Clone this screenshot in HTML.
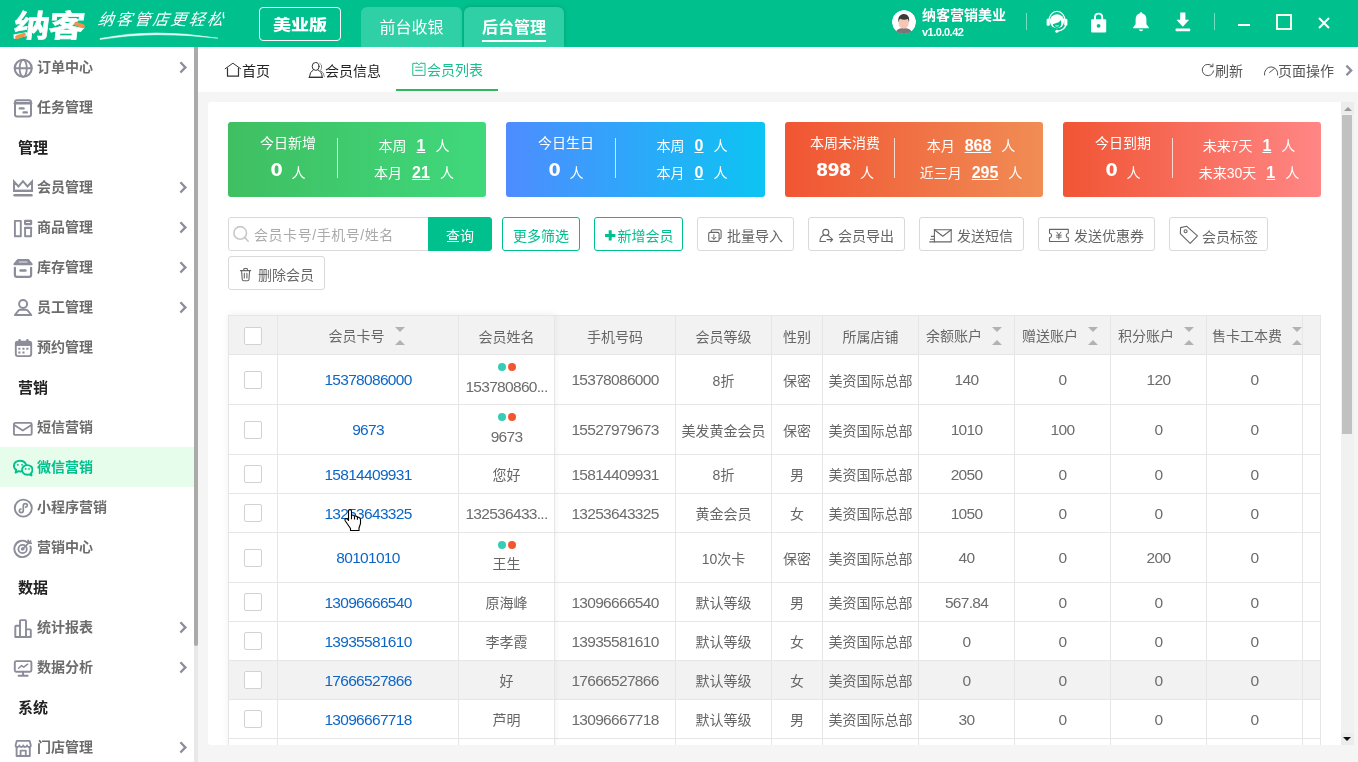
<!DOCTYPE html>
<html lang="zh-CN">
<head>
<meta charset="utf-8">
<title>会员列表</title>
<style>
*{box-sizing:border-box;margin:0;padding:0}
html,body{width:1358px;height:762px;overflow:hidden;background:#f5f5f5;font-family:"Liberation Sans","Noto Sans CJK SC",sans-serif;font-size:14px;color:#666}
.abs{position:absolute}
#app{position:absolute;left:0;top:0;width:1358px;height:762px;overflow:hidden;will-change:transform;background:#f5f5f5}
/* ---------- top bar ---------- */
#top{position:absolute;left:0;top:0;width:1358px;height:47px;background:#00c08e;color:#fff}
#logo{position:absolute;left:13.5px;top:2.5px;width:74px;height:40px}
#slogan{position:absolute;left:98px;top:9px;font-size:16px;letter-spacing:2.2px;font-style:italic;font-weight:400;line-height:22px;white-space:nowrap;transform:skewX(-8deg)}
#swoosh{position:absolute;left:98px;top:30px}
#ver{position:absolute;left:259px;top:7px;width:82px;height:34px;border:1px solid #fff;border-radius:4px;text-align:center;white-space:nowrap}
#ver span{display:inline-block;font-size:18px;font-weight:900;line-height:32px;transform:scale(1,.82);transform-origin:50% 62%}
.ttab{position:absolute;top:7px;height:40px;width:100px;background:#2fd0a5;border-radius:6px 6px 0 0;text-align:center;font-size:16px;line-height:42px;white-space:nowrap}
#tt2 span{display:inline-block;font-weight:700;position:relative}
#tt2 span:after{content:"";position:absolute;left:0;right:0;top:33px;height:2px;background:#fff}
#tt2{box-shadow:0 0 4px rgba(0,60,40,.28)}
#uname{position:absolute;left:922px;top:5px;font-size:14px;font-weight:700;line-height:20px;white-space:nowrap}
#uver{position:absolute;left:922px;top:25px;letter-spacing:-.5px;font-size:11px;font-weight:700;line-height:14px;white-space:nowrap}
.tsep{position:absolute;top:13px;width:1px;height:17px;background:rgba(255,255,255,.45)}

#logo .lg{position:absolute;left:0;top:0;font-family:"Noto Sans CJK SC",sans-serif;font-weight:700;font-size:31px;line-height:42px;white-space:nowrap;transform-origin:0 50%;transform:scaleX(1.17) skewX(-6deg);letter-spacing:-1px;-webkit-text-stroke:.6px #fff}
#logo i{position:absolute;background:#f4914a;height:4px;border-radius:2px;transform:rotate(-18deg)}
#logo .o1{left:1px;top:31px;width:11px}
#logo .o2{left:60px;top:20px;width:11px;transform:rotate(20deg)}
/* ---------- sidebar ---------- */
#side{position:absolute;left:0;top:47px;width:194px;height:715px;background:#fff;overflow:hidden}
#sbar{position:absolute;left:194px;top:47px;width:4px;height:715px;background:#e8e8e8}
#sbar i{position:absolute;left:0;top:0;width:4px;height:599px;background:#aaa;border-radius:0 0 2px 2px}
.mi{position:absolute;left:0;width:194px;height:40px;line-height:40px;font-weight:700;font-size:14px;color:#6c6c6c;white-space:nowrap}
.mi span{position:absolute;left:37px;top:0}
.mi svg.ic{position:absolute;left:13px;top:10px}
.mi svg.ch{position:absolute;left:179px;top:14px}
.mi.on{background:#e6fdec;color:#00c08e}
.mh{position:absolute;left:18px;height:40px;line-height:42px;font-weight:700;font-size:15px;color:#222;white-space:nowrap}
/* ---------- page tabs ---------- */
#tabs{position:absolute;left:198px;top:47px;width:1160px;height:45px;background:#fff;border-top:2px solid #f8f6f6}
.pt{position:absolute;top:47px;height:45px;line-height:49px;font-size:14px;color:#222;white-space:nowrap}
/* ---------- main card ---------- */
#card{position:absolute;left:208px;top:102px;width:1133px;height:643px;background:#fff;border-radius:3px 0 0 3px;overflow:hidden}
#vs{position:absolute;left:1341px;top:102px;width:13px;height:643px;background:#f1f1f1}
#vs i{position:absolute;left:1px;top:13px;width:10px;height:319px;background:#c1c1c1}
#vs b{position:absolute;left:0;width:13px;height:12px;background:#ececec}
#vs b:after{content:"";position:absolute;left:2.5px;top:4.5px;border:4px solid transparent}
#vs b.u{top:0}#vs b.u:after{border-bottom:4.500px solid #9a9a9a;border-top-width:0}
#vs b.dn{top:631px}#vs b.dn:after{border-top:4.500px solid #111;border-bottom-width:0;top:3.5px;left:2px}
.st{position:absolute;top:20px;width:258px;height:75px;border-radius:3px;color:#fff;white-space:nowrap}
.st .a{position:absolute;left:0;width:120px;top:10px;text-align:center;line-height:22px;font-size:14px}
.st .b{position:absolute;left:0;width:120px;top:35px;text-align:center;line-height:26px;font-size:14px}
.st .b u{text-decoration:none;position:relative;top:1.5px}
.st .b b{font-family:"DejaVu Sans","Liberation Sans",sans-serif;font-size:17.5px;letter-spacing:-.7px;margin-right:9.5px}
.st .d{position:absolute;left:109px;top:16px;width:1px;height:40px;background:rgba(255,255,255,.75)}
.st .r{position:absolute;left:112px;width:148px;text-align:center;line-height:24px;font-size:14px}
.st .r b{font-size:16px;text-decoration:underline;text-underline-offset:1px;margin:0 10px}
.st .r1{top:12px}.st .r2{top:39px}
/* toolbar */
.btn{position:absolute;height:34px;border:1px solid #d9d9d9;border-radius:3px;background:#fff;color:#666;font-size:14px;line-height:32px;white-space:nowrap}
.btn span{position:absolute;top:2px}
.btn svg{position:absolute}
.btn.g{border-color:#00c08e;color:#00c08e}
/* table */
#tb{position:absolute;left:20px;top:213px;width:1093px;height:440px;border:1px solid #e6e6e6;overflow:hidden}
#fx{position:absolute;left:20px;top:213px;width:327px;height:440px;box-shadow:0 -1px 7px rgba(0,0,0,.06)}
table{border-collapse:separate;border-spacing:0;table-layout:fixed;width:1170px}
td,th{border-right:1px solid #e6e6e6;border-bottom:1px solid #e6e6e6;text-align:center;font-weight:400;font-size:14px;color:#666;white-space:nowrap;overflow:hidden;padding:0;vertical-align:middle;position:relative}
th{height:39px;background:#f2f2f2;line-height:20px;padding-top:3px}
th.sl{text-align:left;padding-left:7px}
th.c10{padding-left:5px}
th.c1{padding-right:3px}
th .cb{top:-2px}
.n{font-size:15.5px;letter-spacing:-.7px;color:#6c6c6c}
tr.s td.n{padding-top:2px}
tr.h td{height:50px}
tr.s td{height:39px}
tr.hv td{background:#f2f2f2}
td a{color:#0d66c6;text-decoration:none}
.cb{display:inline-block;width:18px;height:18px;border:1px solid #d2d2d2;border-radius:2px;background:#fff;vertical-align:middle;position:relative;top:0}
.so{display:inline-block;position:relative;width:10px;height:20px;vertical-align:middle;margin-left:10px;top:-1px}
.so:before{content:"";position:absolute;left:0;top:1px;border:5px solid transparent;border-top-color:#b2b2b2;border-bottom-width:0}
.so:after{content:"";position:absolute;left:0;top:14px;border:5px solid transparent;border-bottom-color:#b2b2b2;border-top-width:0}
.dots{position:absolute;left:0;right:0;top:8px;height:9px;text-align:center;line-height:9px;font-size:0}
.dots i{display:inline-block;width:8px;height:8px;border-radius:50%;background:#36cdb5}
.dots i+i{background:#f2562f;margin-left:2px}
.nm{display:block;padding-top:15px}
.nm.nc{padding-top:11px}
</style>
</head>
<body>
<div id="app">
<div id="top">

  <div id="logo"><span class="lg">纳客</span><i class="o1"></i><i class="o2"></i></div>
  <svg id="swoosh" width="124" height="12" viewBox="0 0 124 12"><path d="M2 8.5 Q55 -2.5 120 8.2 Q55 0.5 2 9.5Z" fill="#e8fff6" stroke="#e8fff6" stroke-width=".5"/></svg>
  <svg class="abs" style="left:892px;top:10px" width="24" height="24" viewBox="0 0 24 24"><defs><clipPath id="avc"><circle cx="12" cy="12" r="12"/></clipPath></defs><g clip-path="url(#avc)"><circle cx="12" cy="12" r="12" fill="#fff"/><rect x="10" y="15" width="3.4" height="5" fill="#f7c5b4"/><ellipse cx="11.7" cy="13" rx="5.1" ry="5.6" fill="#f7c5b4"/><path d="M6.4 12.6Q5.6 7.2 8.4 5.2Q11.4 3.2 14.8 4.8Q17.8 6.6 17 12.4Q16.6 10.2 15.8 9Q12 10.4 8 8.8Q6.8 10.2 6.4 12.6Z" fill="#3b3b3b"/><path d="M3.5 24Q4 19.6 8 18.6L10 18.3Q11.7 19.2 13.4 18.3L15.6 18.6Q19.6 19.6 20.2 24Z" fill="#777"/></g></svg>
  <svg class="abs" style="left:1046px;top:10px" width="22" height="24" viewBox="0 0 22 24" fill="none"><path d="M3 10.400A8 9 0 0 1 19 10.400" stroke="#fff" stroke-width="1.200"/><ellipse cx="11" cy="11.300" rx="7.100" ry="7" fill="#fff"/><path d="M6.800 14.200Q9.800 13.200 12.600 12.300Q14 11.700 14.500 10.100Q15.900 12.500 15.300 14.800Q14.300 17.900 11 18.100Q7.600 17.900 6.800 14.200Z" fill="#00c08e"/><path d="M9.400 15.700Q11 16.500 12.700 15.700" stroke="#fff" stroke-width=".9"/><rect x=".600" y="8.800" width="3.200" height="7" rx="1.300" fill="#fff"/><rect x="18.200" y="8.800" width="3.200" height="7" rx="1.300" fill="#fff"/><path d="M19.800 15Q18.600 19.900 11.600 21.200" stroke="#fff" stroke-width="1.300"/><circle cx="10.800" cy="21.300" r="1.500" fill="#fff"/></svg>
  <svg class="abs" style="left:1090px;top:11px" width="18" height="23" viewBox="0 0 18 23" fill="none"><path d="M5 9V6.2Q5 2.6 8.6 2.6Q12.2 2.6 12.2 6.2V9" stroke="#fff" stroke-width="1.9"/><rect x="1" y="8.2" width="15.2" height="13.2" rx="1.2" fill="#fff"/><circle cx="8.6" cy="14.8" r="1.9" fill="#00c08e"/></svg>
  <svg class="abs" style="left:1132px;top:11px" width="18" height="22" viewBox="0 0 18 22" fill="#fff"><path d="M9 1.2Q10.2 1.2 10.4 2.4Q14.4 3.6 14.4 8.4V13.2L16.8 16.2V17.2H1.200V16.2L3.600 13.2V8.4Q3.600 3.600 7.600 2.4Q7.800 1.200 9 1.200Z"/><path d="M6.800 18.400H11.200Q10.800 20.200 9 20.200Q7.200 20.200 6.800 18.400Z"/></svg>
  <svg class="abs" style="left:1174px;top:11px" width="18" height="22" viewBox="0 0 18 22" fill="#fff"><path d="M6.200 1.600H11.400V8.800H15.200L8.800 15.800L2.400 8.800H6.200Z"/><rect x="1.600" y="17.600" width="14.600" height="2.600" rx=".6"/></svg>
  <div class="abs" style="left:1238px;top:24px;width:12px;height:2px;background:#fff"></div>
  <div class="abs" style="left:1276px;top:14px;width:16px;height:16px;border:2px solid #f3ffe9"></div>
  <svg class="abs" style="left:1317px;top:16px" width="14" height="14" viewBox="0 0 14 14"><path d="M2 2L12 12M12 2L2 12" stroke="#fff" stroke-width="2"/></svg>
  <div id="slogan">纳客管店更轻松</div>
  <div id="ver"><span>美业版</span></div>
  <div class="ttab" id="tt1" style="left:361px;width:101px">前台收银</div>
  <div class="ttab" id="tt2" style="left:464px"><span>后台管理</span></div>
  <div id="uname">纳客营销美业</div>
  <div id="uver">v1.0.0.42</div>
  <div class="tsep" style="left:1026px"></div>
  <div class="tsep" style="left:1214px"></div>
</div>
<div id="side">
<div class="mi" style="top:0px"><svg class="ic" width="20" height="22" viewBox="0 0 20 22" fill="none" stroke="#8c8c9a" stroke-width="1.7" stroke-linecap="round" stroke-linejoin="round"><circle cx="10.2" cy="11.3" r="8.5" stroke-width="2.1"/><ellipse cx="10.2" cy="11.3" rx="3.600" ry="8.500" stroke-width="1.800"/><path d="M1.800 11.300H18.600" stroke-width="2.100"/></svg><span>订单中心</span><svg class="ch" width="9" height="13" viewBox="0 0 9 13"><path d="M1.400 1.300L6.400 6.400L1.400 11.500" fill="none" stroke="#8c8c9a" stroke-width="2.300"/></svg></div>
<div class="mi" style="top:40px"><svg class="ic" width="20" height="22" viewBox="0 0 20 22" fill="none" stroke="#8c8c9a" stroke-width="1.7" stroke-linecap="round" stroke-linejoin="round"><rect x="2" y="3.300" width="16" height="16.200" rx="2" stroke-width="2"/><path d="M2 6.300H18" stroke-width="2.600"/><path d="M6.800 11.400H10.600M10.600 15.400H13.800" stroke-width="2.400"/></svg><span>任务管理</span></div>
<div class="mh" style="top:80px">管理</div>
<div class="mi" style="top:120px"><svg class="ic" width="20" height="22" viewBox="0 0 20 22" fill="none" stroke="#8c8c9a" stroke-width="1.7" stroke-linecap="round" stroke-linejoin="round"><path d="M1 4.600V14H19V4.600L14.500 9.400L10 4.200L5.500 9.400Z" stroke-width="2" stroke-linejoin="miter"/><path d="M1 13.800H19" stroke-width="2.400" stroke-linecap="butt"/><path d="M1.600 18.300H18.400" stroke-width="2.600"/></svg><span>会员管理</span><svg class="ch" width="9" height="13" viewBox="0 0 9 13"><path d="M1.400 1.300L6.400 6.400L1.400 11.500" fill="none" stroke="#8c8c9a" stroke-width="2.300"/></svg></div>
<div class="mi" style="top:160px"><svg class="ic" width="20" height="22" viewBox="0 0 20 22" fill="none" stroke="#8c8c9a" stroke-width="1.7" stroke-linecap="round" stroke-linejoin="round"><rect x="1.900" y="3.900" width="5.900" height="15.300" stroke-width="1.900"/><rect x="12.100" y="3.900" width="6" height="3.200" stroke-width="2.200"/><rect x="12.100" y="11" width="6" height="8.200" stroke-width="1.900"/><path d="M12.100 10.900H18.100" stroke-width="2.400"/></svg><span>商品管理</span><svg class="ch" width="9" height="13" viewBox="0 0 9 13"><path d="M1.400 1.300L6.400 6.400L1.400 11.500" fill="none" stroke="#8c8c9a" stroke-width="2.300"/></svg></div>
<div class="mi" style="top:200px"><svg class="ic" width="20" height="22" viewBox="0 0 20 22" fill="none" stroke="#8c8c9a" stroke-width="1.7" stroke-linecap="round" stroke-linejoin="round"><path d="M5 3H15.200L18.600 7.200H1.400Z" stroke-width="2" fill="#8c8c9a"/><path d="M6.200 5H14" stroke="#fff" stroke-width=".8"/><path d="M1.900 10.800V17.800Q1.900 19.900 4 19.900H16Q18.100 19.900 18.100 17.800V10.800" stroke-width="2.200"/><path d="M7.600 13.500H12.400" stroke-width="2.600"/></svg><span>库存管理</span><svg class="ch" width="9" height="13" viewBox="0 0 9 13"><path d="M1.400 1.300L6.400 6.400L1.400 11.500" fill="none" stroke="#8c8c9a" stroke-width="2.300"/></svg></div>
<div class="mi" style="top:240px"><svg class="ic" width="20" height="22" viewBox="0 0 20 22" fill="none" stroke="#8c8c9a" stroke-width="1.7" stroke-linecap="round" stroke-linejoin="round"><circle cx="10.100" cy="7" r="4" stroke-width="1.900"/><path d="M1.900 18L5.600 13.400Q6.300 12.700 7.500 12.700H12.700Q13.900 12.700 14.600 13.400L18.300 18Z" stroke-width="1.900"/></svg><span>员工管理</span><svg class="ch" width="9" height="13" viewBox="0 0 9 13"><path d="M1.400 1.300L6.400 6.400L1.400 11.500" fill="none" stroke="#8c8c9a" stroke-width="2.300"/></svg></div>
<div class="mi" style="top:280px"><svg class="ic" width="20" height="22" viewBox="0 0 20 22" fill="none" stroke="#8c8c9a" stroke-width="1.7" stroke-linecap="round" stroke-linejoin="round"><rect x="2.800" y="4.600" width="15.400" height="14.500" rx="2" stroke-width="1.900"/><path d="M3 5.200H18V8.400H3Z" fill="#8c8c9a" stroke-width="1"/><path d="M6.600 3.200V5M14.400 3.200V5" stroke-width="2.600"/><path d="M6.300 11.700h.1M10.400 11.700h.1M14.300 11.700h.1M6.300 15.400h.1M10.400 15.400h.1" stroke-width="2" stroke-linecap="square"/></svg><span>预约管理</span></div>
<div class="mh" style="top:320px">营销</div>
<div class="mi" style="top:360px"><svg class="ic" width="20" height="22" viewBox="0 0 20 22" fill="none" stroke="#8c8c9a" stroke-width="1.7" stroke-linecap="round" stroke-linejoin="round"><rect x="0.900" y="5.900" width="17.800" height="12" rx="1.500" stroke-width="1.900"/><path d="M1.600 8.200L9.800 13.600L18 8.200" stroke-width="1.800"/></svg><span>短信营销</span></div>
<div class="mi on" style="top:400px"><svg class="ic" width="20" height="22" viewBox="0 0 20 22" fill="none" stroke="#00c08e" stroke-width="1.7" stroke-linecap="round" stroke-linejoin="round"><path d="M8.300 14.300Q7 14.700 5.400 14.200L2.600 15.600L3.200 12.900Q.900 11.300 .900 9Q.900 6.600 2.700 5.100Q4.500 3.700 7 3.700Q9.400 3.700 11.100 4.900Q12.600 6 13 7.600" stroke-width="1.900"/><path d="M14.300 8.100Q16.700 8.100 18.100 9.500Q19.500 10.900 19.500 12.900Q19.500 14.700 18.100 16L18.500 18.500L16.200 17.300Q15.200 17.700 14.300 17.700Q11.900 17.700 10.500 16.300Q9.100 14.900 9.100 12.900Q9.100 10.900 10.500 9.500Q11.900 8.100 14.300 8.100Z" stroke-width="1.900"/><path d="M4.800 7.800h.1M9 7.800h.1M12.600 11.900h.1M16 11.900h.1" stroke-width="1.800"/></svg><span>微信营销</span></div>
<div class="mi" style="top:440px"><svg class="ic" width="20" height="22" viewBox="0 0 20 22" fill="none" stroke="#8c8c9a" stroke-width="1.7" stroke-linecap="round" stroke-linejoin="round"><circle cx="10.300" cy="11.100" r="8.500" stroke-width="1.900"/><path d="M10.300 13.600V8.600Q10.300 6.600 12.300 6.600Q14.300 6.600 14.300 8.400Q14.300 10 12.600 10.200M10.300 8.600V13.600Q10.300 15.600 8.300 15.600Q6.300 15.600 6.300 13.800Q6.300 12.200 8 12" stroke-width="1.700"/></svg><span>小程序营销</span></div>
<div class="mi" style="top:480px"><svg class="ic" width="20" height="22" viewBox="0 0 20 22" fill="none" stroke="#8c8c9a" stroke-width="1.7" stroke-linecap="round" stroke-linejoin="round"><path d="M14.600 5.400A8.200 8.200 0 1 0 17.400 9.400" stroke-width="1.900"/><circle cx="9.600" cy="12" r="4.200" stroke-width="1.800"/><circle cx="9.600" cy="12" r="1.300" fill="#8c8c9a" stroke-width="1"/><path d="M9.800 11.800L17.600 4M15.200 3.400V6.200H18.200" stroke-width="1.700"/></svg><span>营销中心</span></div>
<div class="mh" style="top:520px">数据</div>
<div class="mi" style="top:560px"><svg class="ic" width="20" height="22" viewBox="0 0 20 22" fill="none" stroke="#8c8c9a" stroke-width="1.7" stroke-linecap="round" stroke-linejoin="round"><path d="M2.300 20V9.600Q2.300 8.800 3.100 8.800H7V3.900Q7 3.100 7.800 3.100H12.200Q13 3.100 13 3.900V12.400H17Q17.800 12.400 17.800 13.200V20Z" stroke-width="1.900"/><path d="M7 8.800V20M13 12.400V20" stroke-width="1.900"/></svg><span>统计报表</span><svg class="ch" width="9" height="13" viewBox="0 0 9 13"><path d="M1.400 1.300L6.400 6.400L1.400 11.500" fill="none" stroke="#8c8c9a" stroke-width="2.300"/></svg></div>
<div class="mi" style="top:600px"><svg class="ic" width="20" height="22" viewBox="0 0 20 22" fill="none" stroke="#8c8c9a" stroke-width="1.7" stroke-linecap="round" stroke-linejoin="round"><rect x="1.800" y="4.100" width="16.600" height="10.600" rx="1.500" stroke-width="1.900"/><path d="M10.100 14.700V18.400M5.600 18.800H14.600" stroke-width="2"/><path d="M5.600 11.200L8.600 8.600L10.800 10.200L14.600 7.200" stroke-width="1.500"/></svg><span>数据分析</span><svg class="ch" width="9" height="13" viewBox="0 0 9 13"><path d="M1.400 1.300L6.400 6.400L1.400 11.500" fill="none" stroke="#8c8c9a" stroke-width="2.300"/></svg></div>
<div class="mh" style="top:640px">系统</div>
<div class="mi" style="top:680px"><svg class="ic" width="20" height="22" viewBox="0 0 20 22" fill="none" stroke="#8c8c9a" stroke-width="1.7" stroke-linecap="round" stroke-linejoin="round"><path d="M2.6 8.2L3.8 3.8H16.6L17.8 8.2Q17.8 10 16 10Q14.3 10 14 8.4Q13.6 10 12 10Q10.4 10 10.2 8.4Q9.9 10 8.3 10Q6.7 10 6.4 8.4Q6 10 4.4 10Q2.6 10 2.6 8.2Z" stroke-width="1.800"/><path d="M3.600 10V19H16.800V10" stroke-width="1.900"/><path d="M7.600 19V13.600H12.800V19" stroke-width="1.800"/></svg><span>门店管理</span><svg class="ch" width="9" height="13" viewBox="0 0 9 13"><path d="M1.400 1.300L6.400 6.400L1.400 11.500" fill="none" stroke="#8c8c9a" stroke-width="2.300"/></svg></div>
</div>
<div id="sbar"><i></i></div>
<div id="tabs"></div>
<div class="pt" style="left:242px">首页</div>
<div class="pt" style="left:325px">会员信息</div>
<div class="pt" style="left:427px;color:#1abf8c;line-height:47px">会员列表</div>
<div class="abs" style="left:396px;top:89px;width:102px;height:2px;background:#2fb95d"></div>
<div class="pt" style="left:1215px;color:#555">刷新</div>
<div class="pt" style="left:1278px;color:#555">页面操作</div>
<svg class="abs" style="left:198px;top:47px" width="1160" height="45" viewBox="198 47 1160 45" fill="none" stroke="#333" stroke-width="1" stroke-linecap="round" stroke-linejoin="round">
<path d="M225.200 68.700L232.900 63.200L240.600 68.700"/><path d="M227.500 68.200V76.200H238.500V68.200" stroke-width="1.200"/>
<g><ellipse cx="315.600" cy="66.400" rx="3.400" ry="3.900"/><path d="M313.400 69.800Q309.600 71.600 309.400 77.300H322.200Q322 71.600 317.800 69.800" /><path d="M309.200 77.400H322.400" stroke-width="1.300"/><path d="M319.800 63.200Q322.400 64.400 321.600 68.200Q321 69.800 320.200 70.400Q323.800 72 324.400 76.400" stroke="#888"/></g>
<g stroke="#1abf8c"><path d="M416.600 63.300H412.800V75.400H425V63.300H421.400"/><path d="M416.800 62.800L418.900 64.800L421 62.800"/><path d="M415.600 67.200H422.200M415.600 70.300H422.200"/></g>
<g stroke="#555"><path d="M1212.400 66.400A5.700 5.700 0 1 0 1213.600 70.900"/><path d="M1210.200 66.700H1212.900V64"/></g>
<g stroke="#555"><path d="M1264.500 75A6.700 6.900 0 1 1 1277.700 75"/><path d="M1269.600 72.400L1274.400 68.600"/></g>
<path d="M1346.400 65.600L1351.200 70.400L1346.400 75.200" stroke="#8c8c9a" stroke-width="2.300" stroke-linecap="butt" stroke-linejoin="miter"/>
</svg>
<div id="card">
<div class="st" style="left:20px;background:linear-gradient(90deg,#3fbf62,#40d87c)">
  <div class="a">今日新增</div><div class="b"><b>0</b><u>人</u></div><div class="d"></div>
  <div class="r r1">本周<b>1</b>人</div><div class="r r2">本月<b>21</b>人</div>
</div>
<div class="st" style="left:298px;width:259px;background:linear-gradient(90deg,#4e8cff,#0cc4f3)">
  <div class="a">今日生日</div><div class="b"><b>0</b><u>人</u></div><div class="d"></div>
  <div class="r r1">本周<b>0</b>人</div><div class="r r2">本月<b>0</b>人</div>
</div>
<div class="st" style="left:577px;background:linear-gradient(90deg,#f15533,#f08d55)">
  <div class="a">本周未消费</div><div class="b"><b>898</b><u>人</u></div><div class="d"></div>
  <div class="r r1">本月<b>868</b>人</div><div class="r r2">近三月<b>295</b>人</div>
</div>
<div class="st" style="left:855px;background:linear-gradient(90deg,#f15534,#ff8685)">
  <div class="a">今日到期</div><div class="b"><b>0</b><u>人</u></div><div class="d"></div>
  <div class="r r1">未来7天<b>1</b>人</div><div class="r r2">未来30天<b>1</b>人</div>
</div>
<!-- toolbar -->
<div class="btn" style="left:20px;top:115px;width:201px;border-radius:3px 0 0 3px;color:#aaa"><span style="left:25px;top:1px;letter-spacing:.55px">会员卡号/手机号/姓名</span></div>
<div class="btn" style="left:220px;top:115px;width:64px;background:#00c08e;border-color:#00c08e;color:#fff;border-radius:0 3px 3px 0;text-align:center;line-height:36px">查询</div>
<div class="btn g" style="left:294px;top:115px;width:78px;text-align:center;line-height:36px">更多筛选</div>
<div class="btn g" style="left:386px;top:115px;width:89px"><span style="left:22.5px">新增会员</span></div>
<div class="btn" style="left:489px;top:115px;width:97px"><span style="left:29px">批量导入</span></div>
<div class="btn" style="left:600px;top:115px;width:97px"><span style="left:29px">会员导出</span></div>
<div class="btn" style="left:711px;top:115px;width:105px"><span style="left:37px">发送短信</span></div>
<div class="btn" style="left:830px;top:115px;width:117px"><span style="left:35px">发送优惠券</span></div>
<div class="btn" style="left:961px;top:115px;width:99px"><span style="left:32px;top:3px">会员标签</span></div>
<div class="btn" style="left:20px;top:154px;width:97px"><span style="left:29px">删除会员</span></div>
<svg class="abs" style="left:0;top:0" width="1133" height="200" viewBox="0 0 1133 200" fill="none" stroke="#666" stroke-width="1.1" stroke-linecap="round" stroke-linejoin="round">
<g stroke="#c9c9c9" stroke-width="1.6"><circle cx="32.2" cy="130.9" r="6.3"/><path d="M36.8 135.6L40.2 139.2"/></g>
<path d="M397 133.4H407.400M402.200 128.200V138.600" stroke="#00c08e" stroke-width="3" stroke-linecap="butt"/>
<g><path d="M503.200 130V129.200Q503.200 127.700 504.700 127.700H511.600Q513.100 127.700 513.100 129.200V135.200Q513.100 136.700 511.600 136.700H511.400"/><rect x="500.700" y="130.400" width="10.400" height="9" rx="1.500"/><path d="M505.900 132.600V137.200M503.800 135.300L505.900 137.400L508 135.300" stroke-width="1"/></g>
<g><circle cx="617.800" cy="130.400" r="3"/><path d="M616 133Q612 134.500 612 139.500H617.500M619.500 133.200Q621 133.800 621.800 135M619 137.600H624.600M622.600 135.600L624.600 137.600L622.600 139.600"/></g>
<g><rect x="726.400" y="127.700" width="16.800" height="12.200"/><path d="M726.400 127.700L734.800 134.200L743.200 127.700"/><path d="M723.400 134.400H726M722.600 137.200H726M721.800 139.900H726.400"/></g>
<g><path d="M841.500 127.400H860.300V131.200Q858.200 131.600 858.200 133.500Q858.200 135.400 860.300 135.800V139.500H841.500V135.800Q843.600 135.400 843.600 133.500Q843.600 131.600 841.500 131.200Z"/><path d="M848.800 130.200L850.900 132.800L853 130.200M850.900 132.800V137M848.600 133.200H853.200M848.600 135.100H853.200" stroke-width="1"/></g>
<g><path d="M972.600 125.600L978.800 124.300L989.500 133.800L982.200 141.400L972.300 131.600Z"/><circle cx="977.600" cy="129.200" r="1.500"/></g>
<g><path d="M32.400 168.600H42.800M35.800 168.400V167.200Q35.800 166.500 36.500 166.500H38.700Q39.400 166.500 39.400 167.200V168.400M33.600 168.800L34.200 177.200Q34.300 178.700 35.800 178.700H39.400Q40.900 178.700 41 177.200L41.600 168.800M36.300 171.400V176M38.900 171.400V176"/></g>
</svg>
<div id="tb">
<table><colgroup><col style="width:49px"><col style="width:181px"><col style="width:96px"><col style="width:121px"><col style="width:96px"><col style="width:51px"><col style="width:96px"><col style="width:96px"><col style="width:96px"><col style="width:96px"><col style="width:96px"><col style="width:96px"></colgroup>
<tr><th class="c0"><i class="cb"></i></th><th class="c1">会员卡号<i class="so"></i></th><th class="c2">会员姓名</th><th class="c3">手机号码</th><th class="c4">会员等级</th><th class="c5">性别</th><th class="c6">所属店铺</th><th class="c7 sl">余额账户<i class="so"></i></th><th class="c8 sl">赠送账户<i class="so"></i></th><th class="c9 sl">积分账户<i class="so"></i></th><th class="c10 sl">售卡工本费<i class="so"></i></th><th class="c11"></th></tr>
<tr class="h"><td class="c0"><i class="cb"></i></td><td class="c1 n"><a>15378086000</a></td><td class="c2 n"><div class="dots"><i></i><i></i></div><span class="nm">153780860...</span></td><td class="c3 n">15378086000</td><td class="c4">8折</td><td class="c5">保密</td><td class="c6">美资国际总部</td><td class="c7 n">140</td><td class="c8 n">0</td><td class="c9 n">120</td><td class="c10 n">0</td><td class="c11"></td></tr>
<tr class="h"><td class="c0"><i class="cb"></i></td><td class="c1 n"><a>9673</a></td><td class="c2 n"><div class="dots"><i></i><i></i></div><span class="nm">9673</span></td><td class="c3 n">15527979673</td><td class="c4">美发黄金会员</td><td class="c5">保密</td><td class="c6">美资国际总部</td><td class="c7 n">1010</td><td class="c8 n">100</td><td class="c9 n">0</td><td class="c10 n">0</td><td class="c11"></td></tr>
<tr class="s"><td class="c0"><i class="cb"></i></td><td class="c1 n"><a>15814409931</a></td><td class="c2">您好</td><td class="c3 n">15814409931</td><td class="c4">8折</td><td class="c5">男</td><td class="c6">美资国际总部</td><td class="c7 n">2050</td><td class="c8 n">0</td><td class="c9 n">0</td><td class="c10 n">0</td><td class="c11"></td></tr>
<tr class="s"><td class="c0"><i class="cb"></i></td><td class="c1 n"><a>13253643325</a></td><td class="c2 n">132536433...</td><td class="c3 n">13253643325</td><td class="c4">黄金会员</td><td class="c5">女</td><td class="c6">美资国际总部</td><td class="c7 n">1050</td><td class="c8 n">0</td><td class="c9 n">0</td><td class="c10 n">0</td><td class="c11"></td></tr>
<tr class="h"><td class="c0"><i class="cb"></i></td><td class="c1 n"><a>80101010</a></td><td class="c2"><div class="dots"><i></i><i></i></div><span class="nm nc">王生</span></td><td class="c3 n"></td><td class="c4">10次卡</td><td class="c5">保密</td><td class="c6">美资国际总部</td><td class="c7 n">40</td><td class="c8 n">0</td><td class="c9 n">200</td><td class="c10 n">0</td><td class="c11"></td></tr>
<tr class="s"><td class="c0"><i class="cb"></i></td><td class="c1 n"><a>13096666540</a></td><td class="c2">原海峰</td><td class="c3 n">13096666540</td><td class="c4">默认等级</td><td class="c5">男</td><td class="c6">美资国际总部</td><td class="c7 n">567.84</td><td class="c8 n">0</td><td class="c9 n">0</td><td class="c10 n">0</td><td class="c11"></td></tr>
<tr class="s"><td class="c0"><i class="cb"></i></td><td class="c1 n"><a>13935581610</a></td><td class="c2">李孝霞</td><td class="c3 n">13935581610</td><td class="c4">默认等级</td><td class="c5">女</td><td class="c6">美资国际总部</td><td class="c7 n">0</td><td class="c8 n">0</td><td class="c9 n">0</td><td class="c10 n">0</td><td class="c11"></td></tr>
<tr class="s hv"><td class="c0"><i class="cb"></i></td><td class="c1 n"><a>17666527866</a></td><td class="c2">好</td><td class="c3 n">17666527866</td><td class="c4">默认等级</td><td class="c5">女</td><td class="c6">美资国际总部</td><td class="c7 n">0</td><td class="c8 n">0</td><td class="c9 n">0</td><td class="c10 n">0</td><td class="c11"></td></tr>
<tr class="s"><td class="c0"><i class="cb"></i></td><td class="c1 n"><a>13096667718</a></td><td class="c2">芦明</td><td class="c3 n">13096667718</td><td class="c4">默认等级</td><td class="c5">男</td><td class="c6">美资国际总部</td><td class="c7 n">30</td><td class="c8 n">0</td><td class="c9 n">0</td><td class="c10 n">0</td><td class="c11"></td></tr>
<tr class="s"><td class="c0"><i class="cb"></i></td><td class="c1 n"><a>13096667719</a></td><td class="c2">张三</td><td class="c3 n">13096667719</td><td class="c4">默认等级</td><td class="c5">男</td><td class="c6">美资国际总部</td><td class="c7 n">0</td><td class="c8 n">0</td><td class="c9 n">0</td><td class="c10 n">0</td><td class="c11"></td></tr>
</table>
</div>
<div id="fx"></div>
</div>
<div id="vs"><b class="u"></b><i></i><b class="dn"></b></div>
<svg class="abs" style="left:343.500px;top:508.500px" width="19" height="23" viewBox="0 0 19 23"><path d="M4.500 1.900Q4.500 .600 6 .600Q7.500 .600 7.500 1.900V6.500Q8.500 5.800 9.500 6.200Q10.300 6.500 10.500 7.300Q11.500 6.800 12.400 7.200Q13.200 7.600 13.400 8.400Q14.400 8 15.200 8.500Q16.500 9.200 16.500 10.800V14.500L15 19V21.500H6.500V19.500L1.200 11.800Q.500 10.600 1.500 9.800Q2.600 9.200 3.600 10.200L4.500 11.500Z" fill="#fff" stroke="#000" stroke-width="1.100" stroke-linejoin="round"/><path d="M7.500 6.500V10.200M10.500 7.300V10.400M13.400 8.400V10.800" stroke="#000" stroke-width="1.100" fill="none"/></svg>
</div>
</body>
</html>
